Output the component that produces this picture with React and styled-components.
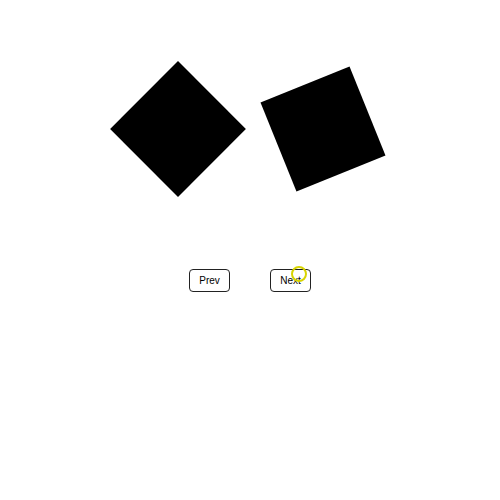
import React, { useState } from 'react'
import styled, { createGlobalStyle } from 'styled-components'

const Global = createGlobalStyle`
  html, body {
    margin: 0;
    padding: 0;
    background: #fff;
    font-family: "Liberation Sans", Arial, sans-serif;
  }
`

const Page = styled.div`
  position: relative;
  width: 500px;
  height: 500px;
  display: flex;
  flex-direction: column;
  align-items: center;
`

const Stage = styled.div`
  display: flex;
  justify-content: center;
  gap: 49px;
  padding-top: 81px;
`

const Square = styled.div`
  width: 96px;
  height: 96px;
  background: #000;
  transform: rotate(${p => p.$angle}deg);
`

const Controls = styled.div`
  display: flex;
  gap: 40px;
  margin-top: 92px;
`

const Button = styled.button`
  width: 41px;
  height: 23px;
  padding: 0;
  background: #fff;
  border: 1px solid #222;
  border-radius: 4px;
  font-family: "Liberation Sans", Arial, sans-serif;
  font-size: 10px;
  color: #000;
  cursor: pointer;
`

const Pointer = styled.div`
  position: absolute;
  left: 291px;
  top: 266px;
  width: 12px;
  height: 12px;
  border: 2px solid #d8d400;
  border-radius: 50%;
  pointer-events: none;
`

const angles = [[45, -22], [0, 45]]

export default function App() {
  const [step, setStep] = useState(0)
  const cur = angles[step % angles.length]

  return (
    <Page>
      <Global />
      <Stage>
        <Square $angle={cur[0]} />
        <Square $angle={cur[1]} />
      </Stage>
      <Controls>
        <Button onClick={() => setStep(s => Math.max(0, s - 1))}>Prev</Button>
        <Button onClick={() => setStep(s => s + 1)}>Next</Button>
      </Controls>
      <Pointer />
    </Page>
  )
}
